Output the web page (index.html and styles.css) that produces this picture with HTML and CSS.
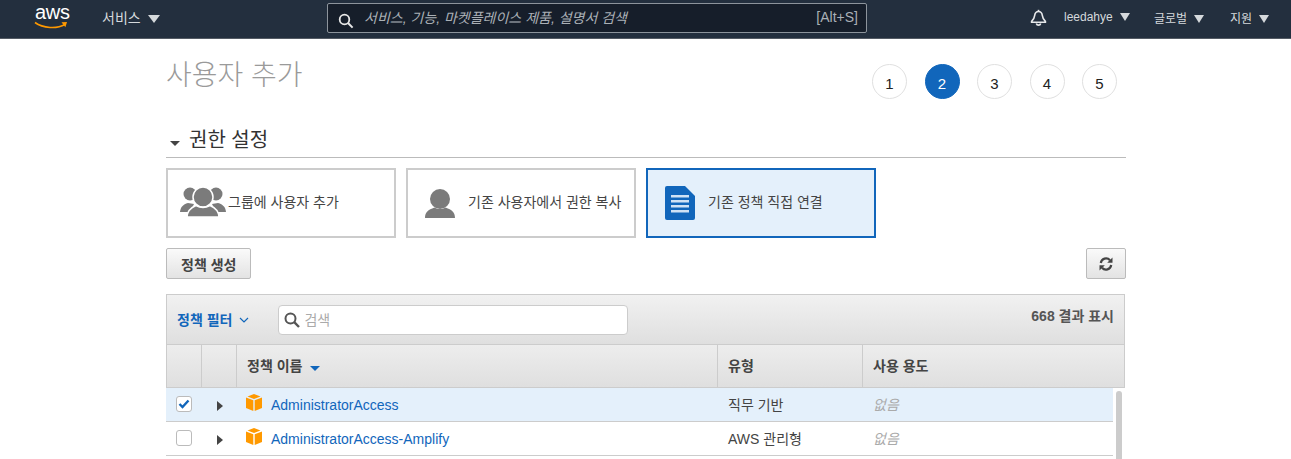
FILE: index.html
```html
<!DOCTYPE html>
<html lang="ko">
<head>
<meta charset="utf-8">
<title>사용자 추가</title>
<link rel="stylesheet" href="styles.css">
</head>
<body>
<nav class="topnav">
  <div class="logo">
    <span class="logo-text">aws</span>
    <svg class="logo-smile" width="34" height="9" viewBox="0 0 34 9"><path d="M1 1.500C9 7.500 23 8 31 3.500" fill="none" stroke="#f90" stroke-width="1.600"/><path d="M27.500 1.200L33 1l-1.600 5.200z" fill="#f90"/></svg>
  </div>
  <div class="nav-item services">서비스 <span class="caret"></span></div>
  <div class="nav-search">
    <svg class="search-icon" width="16" height="16" viewBox="0 0 16 16"><circle cx="6.500" cy="6.500" r="4.800" fill="none" stroke="#e8e8e8" stroke-width="1.800"/><path d="M10 10l4.600 4.600" stroke="#e8e8e8" stroke-width="2"/></svg>
    <span class="search-hint">서비스, 기능, 마켓플레이스 제품, 설명서 검색</span>
    <span class="search-key">[Alt+S]</span>
  </div>
  <div class="nav-right">
    <svg class="bell" width="17" height="18" viewBox="0 0 17 18"><path d="M8.500 2.500c-2.400 0-3.500 1.800-3.800 3.900-.3 2.500-1.200 4.300-3.100 6v.8h13.800v-.8c-1.900-1.700-2.800-3.500-3.100-6-.3-2.100-1.400-3.900-3.800-3.900z" fill="none" stroke="#e6e8ea" stroke-width="1.600"/><path d="M6.300 14.500a2.300 2.300 0 0 0 4.400 0" fill="none" stroke="#e6e8ea" stroke-width="1.600"/><path d="M8.500 .8v2" stroke="#e6e8ea" stroke-width="1.600"/></svg>
    <div class="nav-item small user">leedahye <span class="caret"></span></div>
    <div class="nav-item small global">글로벌 <span class="caret"></span></div>
    <div class="nav-item small support">지원 <span class="caret"></span></div>
  </div>
</nav>

<main class="wrap">
  <header class="page-head">
    <h1>사용자 추가</h1>
    <ol class="steps">
      <li>1</li>
      <li class="on">2</li>
      <li>3</li>
      <li>4</li>
      <li>5</li>
    </ol>
  </header>

  <h2 class="section"><span class="section-caret"></span>권한 설정</h2>

  <div class="tiles">
    <div class="tile tile-group">
      <svg width="46" height="32" viewBox="0 0 46 32"><g fill="#7b7b7b"><circle cx="10" cy="9" r="6.500"/><circle cx="36" cy="9" r="6.500"/><path d="M0 27c.5-5 3-7.500 8-9l6 1-4 8z"/><path d="M46 27c-.5-5-3-7.500-8-9l-6 1 4 8z"/></g><circle cx="23" cy="12" r="10" fill="#7b7b7b" stroke="#fff" stroke-width="1.500"/><path d="M7 32c.3-6 3-9 9-11.500 4.500 2.500 9.500 2.500 14 0 6 2.500 8.700 5.500 9 11.500z" fill="#7b7b7b" stroke="#fff" stroke-width="1.500"/></svg>
      <span>그룹에 사용자 추가</span>
    </div>
    <div class="tile tile-user">
      <svg width="30" height="29" viewBox="0 0 30 29"><circle cx="15" cy="10" r="10" fill="#7b7b7b"/><path d="M0 29c0-6 3-8 9.500-10.500 4 2 7 2 11 0C27 21 30 23 30 29z" fill="#7b7b7b"/></svg>
      <span>기존 사용자에서 권한 복사</span>
    </div>
    <div class="tile tile-doc on">
      <svg width="30" height="34" viewBox="0 0 30 34"><path d="M2 0h18l10 10v22a2 2 0 0 1-2 2H2a2 2 0 0 1-2-2V2a2 2 0 0 1 2-2z" fill="#1166bb"/><g fill="#cfe2f5"><rect x="6" y="9" width="18" height="2.500"/><rect x="6" y="14" width="18" height="2.500"/><rect x="6" y="19" width="18" height="2.500"/><rect x="6" y="24" width="18" height="2.500"/></g></svg>
      <span>기존 정책 직접 연결</span>
    </div>
  </div>

  <div class="actions">
    <button class="btn">정책 생성</button>
    <button class="btn btn-icon" aria-label="새로 고침">
      <svg width="14" height="14" viewBox="0 0 14 14"><path d="M1.800 6A5.300 5.300 0 0 1 11 3.200" fill="none" stroke="#444" stroke-width="2.200"/><path d="M13.500 .5v5.300H8.200z" fill="#444"/><path d="M12.200 8A5.300 5.300 0 0 1 3 10.800" fill="none" stroke="#444" stroke-width="2.200"/><path d="M.5 13.500V8.200h5.300z" fill="#444"/></svg>
    </button>
  </div>

  <section class="grid">
    <div class="filter-bar">
      <span class="filter-label">정책 필터</span>
      <svg class="chev" width="10" height="6" viewBox="0 0 10 6"><path d="M1 1l4 4 4-4" fill="none" stroke="#1166bb" stroke-width="1.200"/></svg>
      <div class="filter-input">
        <svg width="16" height="16" viewBox="0 0 16 16"><circle cx="6.500" cy="6.500" r="5" fill="none" stroke="#555" stroke-width="2"/><path d="M10.200 10.200l4.800 4.800" stroke="#555" stroke-width="2.400"/></svg>
        <span>검색</span>
      </div>
      <span class="count">668 결과 표시</span>
    </div>
    <div class="row head">
      <div></div>
      <div></div>
      <div>정책 이름 <span class="sort"></span></div>
      <div>유형</div>
      <div>사용 용도</div>
    </div>
    <div class="body">
      <div class="rows">
        <div class="row item sel">
          <div><span class="check on"><svg width="12" height="10" viewBox="0 0 12 10"><path d="M1.500 5l3 3 6-6.500" fill="none" stroke="#1166bb" stroke-width="2.400"/></svg></span></div>
          <div><span class="expand"></span></div>
          <div class="name">
            <svg class="box" width="16" height="17" viewBox="0 0 16 17"><path d="M8 0l6.500 2.500L8 5 1.500 2.500z" fill="#f90"/><path d="M0 3.500L7.300 6.300V17L0 14z" fill="#f90"/><path d="M16 3.500L8.700 6.300V17L16 14z" fill="#f90"/></svg>
            <a>AdministratorAccess</a>
          </div>
          <div>직무 기반</div>
          <div class="none">없음</div>
        </div>
        <div class="row item">
          <div><span class="check"></span></div>
          <div><span class="expand"></span></div>
          <div class="name">
            <svg class="box" width="16" height="17" viewBox="0 0 16 17"><path d="M8 0l6.500 2.500L8 5 1.500 2.500z" fill="#f90"/><path d="M0 3.500L7.300 6.300V17L0 14z" fill="#f90"/><path d="M16 3.500L8.700 6.300V17L16 14z" fill="#f90"/></svg>
            <a>AdministratorAccess-Amplify</a>
          </div>
          <div>AWS 관리형</div>
          <div class="none">없음</div>
        </div>
      </div>
      <div class="scroll"><span></span></div>
    </div>
  </section>
</main>
</body>
</html>
```

FILE: styles.css
```css
html, body {margin: 0; padding: 0; height: 459px; overflow: hidden;}
body {background: #fff; color: #444; font-family: "Liberation Sans", "Noto Sans CJK KR", sans-serif; font-size: 14px;}

.topnav {display: flex; align-items: center; height: 39px; box-sizing: border-box; background: #232f3e; border-bottom: 1px solid #545b64; color: #d5d9dc;}
.logo {width: 34px; margin-left: 34px; height: 30px;}
.logo-text {display: block; color: #fff; font-size: 20px; line-height: 22px; margin: -3px 0 0 1px; letter-spacing: -.3px;}
.logo-smile {display: block; margin-top: -2px;}
.nav-item {white-space: nowrap; font-size: 14px; padding-bottom: 5px;}
.nav-item.small {font-size: 12px; padding-bottom: 4px;}
.services {margin-left: 34px; width: 231px;}
.caret {display: inline-block; width: 0; height: 0; margin-left: 3px; vertical-align: 0; border-left: 6px solid transparent; border-right: 6px solid transparent; border-top: 8px solid #d5d9dc;}
.small .caret {margin-left: 4px; border-left-width: 5px; border-right-width: 5px;}
.nav-search {display: flex; align-items: center; width: 540px; height: 30px; margin: -2px 0 0 -6px; background: #161e2a; border: 1px solid #8d949c; border-radius: 2px; box-sizing: border-box;}
.search-icon {margin: 6px 0 0 10px;}
.search-hint {margin-left: 10px; padding-bottom: 3px; font-size: 14px; font-style: italic; color: #aab0b6; flex: 1;}
.search-key {margin-right: 8px; padding-bottom: 2px; font-size: 14px; color: #aab0b6;}
.nav-right {display: flex; align-items: center; margin-left: 163px;}
.bell {margin-right: 17px; margin-top: -3px;}
.user {width: 90px;}
.global {width: 76px;}

.wrap {width: 960px; margin: 0 auto 0 166px;}
.page-head {display: flex; justify-content: space-between; height: 80px;}
h1 {margin: 17px 0 0; font-size: 28px; line-height: 40px; font-weight: 300; color: #9a9a9a;}
.steps {display: flex; gap: 17.5px; list-style: none; margin: 25px 9px 0 0; padding: 0;}
.steps li {width: 35px; height: 35px; box-sizing: border-box; border: 1px solid #e0e0e0; border-radius: 50%; text-align: center; line-height: 37px; font-size: 15px; color: #222;}
.steps li.on {background: #1166bb; border-color: #1166bb; color: #fff;}

h2.section {margin: 0; height: 39px; padding-top: 4px; box-sizing: border-box; border-bottom: 1px solid #bbb; font-size: 20px; line-height: 34px; font-weight: 400; color: #333; display: flex; align-items: center;}
.section-caret {width: 0; height: 0; margin: 6px 9px 0 4px; border-left: 5px solid transparent; border-right: 5px solid transparent; border-top: 5px solid #444;}

.tiles {display: flex; gap: 10px; margin-top: 10px;}
.tile {display: flex; align-items: center; width: 230px; height: 70px; box-sizing: border-box; border: 2px solid #ccc; font-size: 14px; color: #444;}
.tile span {padding-bottom: 4px;}
.tile svg {margin-top: -4px;}
.tile-group {padding-left: 12px; gap: 2px;}
.tile-user {padding-left: 17px; gap: 13px;}
.tile-doc {padding-left: 17px; gap: 13px;}
.tile.on {background: #e4f0fb; border-color: #1166bb;}
.tile-doc svg, .tile-user svg {margin-top: 0;}

.actions {display: flex; justify-content: space-between; margin-top: 10px;}
.btn {height: 31px; padding: 0 14px; border: 1px solid #bbb; border-radius: 2px; background: linear-gradient(#fafafa, #e3e3e3); font-family: inherit; font-size: 14px; font-weight: 700; color: #444;}
.btn-icon {width: 40px; padding: 0; display: flex; align-items: center; justify-content: center;}

.grid {margin-top: 15px; width: 959px;}
.filter-bar {display: flex; height: 51px; box-sizing: border-box; padding-left: 10px; align-items: flex-start; border: 1px solid #ccc; background: linear-gradient(#f1f1f1, #dfdfdf);}
.filter-label {margin-top: 14px; font-size: 14px; font-weight: 700; color: #1166bb;}
.chev {margin: 22px 0 0 7px;}
.filter-input {display: flex; align-items: center; gap: 4px; width: 350px; height: 30px; box-sizing: border-box; margin: 10px 0 0 29px; padding-left: 5px; background: #fff; border: 1px solid #ccc; border-radius: 4px; font-size: 14px; color: #aaa;}
.filter-input span {padding-bottom: 2px;}
.count {margin: 10px 10px 0 auto; font-size: 14px; font-weight: 700; color: #555;}

.row {display: grid; grid-template-columns: 35px 35px 481px 145px 1fr;}
.row > div {box-sizing: border-box; padding-left: 11px;}
.head {height: 43px; box-sizing: border-box; border: 1px solid #ccc; border-top: 0; background: linear-gradient(#ededed, #dfdfdf); font-size: 14px; font-weight: 700; color: #444; grid-template-columns: 34px 35px 481px 145px 1fr;}
.head > div {border-left: 1px solid #ccc; padding-left: 10px; line-height: 42px;}
.head > div:first-child {border-left: 0;}
.sort {display: inline-block; width: 0; height: 0; margin-left: 4px; border-left: 5px solid transparent; border-right: 5px solid transparent; border-top: 5px solid #1166bb;}

.body {display: flex;}
.rows {width: 947px;}
.item {height: 34px; box-sizing: border-box; border-bottom: 1px solid #ccc; font-size: 14px; line-height: 35px;}
.item.sel {background: #e4f0fb;}
.item > div:first-child {padding-left: 10px;}
.check {display: block; width: 16px; height: 16px; box-sizing: border-box; margin-top: 8px; background: #fff; border: 1px solid #bbb; border-radius: 3px;}
.check svg {display: block; margin: 2px 0 0 1px;}
.expand {display: block; width: 0; height: 0; margin: 13px 0 0 5px; border-top: 5px solid transparent; border-bottom: 5px solid transparent; border-left: 6px solid #444;}
.name {display: flex; align-items: flex-start; gap: 9px; padding-left: 10px !important;}
.box {margin-top: 6px;}
.name a {color: #1166bb;}
.none {font-style: italic; color: #aaa;}
.scroll {width: 12px; padding-left: 3px; box-sizing: border-box;}
.scroll span {display: block; width: 6px; height: 70px; margin-top: 3px; background: #ccc; border-radius: 3px;}
```
